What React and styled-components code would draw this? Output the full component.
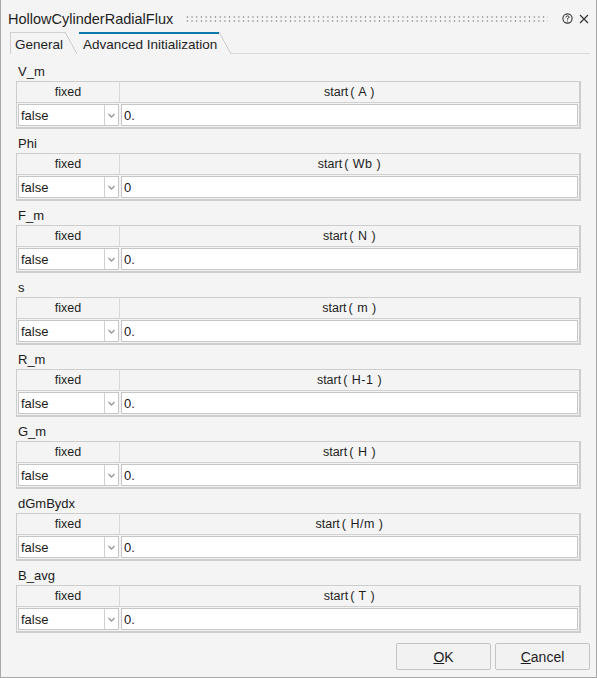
import React from "react";
import styled, { createGlobalStyle } from "styled-components";

const Global = createGlobalStyle`
  html, body { margin: 0; padding: 0; background: #f4f4f4; }
  body { font-family: "Liberation Sans", Arial, sans-serif; color: #1a1a1a; }
  * { box-sizing: border-box; }
`;

const params = [
  { name: "V_m", unit: "A", value: "0." },
  { name: "Phi", unit: "Wb", value: "0" },
  { name: "F_m", unit: "N", value: "0." },
  { name: "s", unit: "m", value: "0." },
  { name: "R_m", unit: "H-1", value: "0." },
  { name: "G_m", unit: "H", value: "0." },
  { name: "dGmBydx", unit: "H/m", value: "0." },
  { name: "B_avg", unit: "T", value: "0." },
];

const Window = styled.div`
  width: 597px;
  height: 678px;
  border: 1px solid #a8a8a8;
  border-top: none;
  background: #f4f4f4;
  display: flex;
  flex-direction: column;
`;

const TitleBar = styled.div`
  height: 32px;
  display: flex;
  align-items: center;
  padding: 6px 7px 0 7px;
  gap: 12px;
`;

const Title = styled.div`
  font-size: 14.5px;
  color: #1e1e1e;
  white-space: nowrap;
`;

const Grip = styled.div`
  flex: 1;
  height: 8px;
  background-image: radial-gradient(circle, #9e9e9e 0.8px, transparent 1.1px);
  background-size: 4.7px 4px;
`;

const TitleIcons = styled.div`
  display: flex;
  align-items: center;
  gap: 6px;
  padding-left: 2px;
`;

const Tabs = styled.div`
  display: flex;
  align-items: flex-end;
  height: 23px;
  margin: 0 6px 0 9px;
`;

const Tab = styled.div`
  position: relative;
  height: 22px;
  display: flex;
  align-items: center;
  padding: 2px 14px 0 4px;
  margin-right: ${(p) => (p.$active ? "0" : "2px")};
  font-size: 13.5px;
  color: #1e1e1e;
  border-left: ${(p) => (p.$active ? "none" : "1px solid #d0d0d0")};
  &::before {
    content: "";
    position: absolute;
    left: 0;
    right: 12px;
    top: 0;
    height: ${(p) => (p.$active ? "2px" : "1px")};
    background: ${(p) => (p.$active ? "#0a7aaa" : "#d0d0d0")};
  }
  &::after {
    content: "";
    position: absolute;
    right: 0;
    top: 0;
    bottom: 0;
    width: 12px;
    background: linear-gradient(
      to top right,
      transparent calc(50% - 0.7px),
      #c2c2c2 50%,
      transparent calc(50% + 0.7px)
    );
  }
`;

const TabRule = styled.div`
  flex: 1;
  border-bottom: 1px solid #dadada;
`;

const Content = styled.div`
  flex: 1;
  padding: 10px 15px 0 15px;
  display: flex;
  flex-direction: column;
`;

const Group = styled.div`
  display: flex;
  flex-direction: column;
  margin-bottom: 7px;
`;

const Label = styled.div`
  font-size: 13px;
  height: 17px;
  line-height: 15px;
  padding-left: 2px;
`;

const Table = styled.div`
  display: grid;
  grid-template-columns: 103px 1fr;
  border: 2px solid #cdcdcd;
  border-top: 1px solid #cdcdcd;
  border-left: 1px solid #cdcdcd;
  background: #f4f4f4;
`;

const HeadCell = styled.div`
  height: 21px;
  display: flex;
  align-items: center;
  justify-content: center;
  font-size: 12.5px;
  color: #1e1e1e;
  border-right: ${(p) => (p.$last ? "none" : "1px solid #d8d8d8")};
  border-bottom: 1px solid #d0d0d0;
`;

const Unit = styled.span`
  margin-left: 2px;
  letter-spacing: 0.5px;
`;

const DataCell = styled.div`
  height: 24px;
  padding: 1px;
  display: flex;
`;

const Select = styled.div`
  flex: 1;
  display: flex;
  background: #fff;
  border: 1px solid #c6c6c6;
`;

const SelectText = styled.div`
  flex: 1;
  font-size: 13px;
  display: flex;
  align-items: center;
  padding-left: 2px;
`;

const Arrow = styled.div`
  width: 14px;
  border-left: 1px solid #d0d0d0;
  display: flex;
  align-items: center;
  justify-content: center;
`;

const Input = styled.div`
  flex: 1;
  background: #fff;
  border: 1px solid #c6c6c6;
  font-size: 13px;
  display: flex;
  align-items: center;
  padding-left: 2px;
`;

const Footer = styled.div`
  display: flex;
  justify-content: flex-end;
  gap: 4px;
  padding: 3px 6px 7px 0;
`;

const Button = styled.button`
  width: 95px;
  height: 27px;
  background: #f2f2f2;
  border: 1px solid #c4c4c4;
  border-radius: 2px;
  font-family: "Liberation Sans", Arial, sans-serif;
  font-size: 14px;
  color: #1e1e1e;
  u { text-decoration: underline; }
`;

const HelpIcon = () => (
  <svg width="11" height="11" viewBox="0 0 11 11">
    <circle cx="5.5" cy="5.5" r="4.6" fill="none" stroke="#333" strokeWidth="1.1" />
    <path d="M3.9 4.4 Q3.9 2.9 5.5 2.9 Q7.1 2.9 7.1 4.2 Q7.1 5 5.5 5.6 L5.5 6.6" fill="none" stroke="#333" strokeWidth="1" />
    <circle cx="5.5" cy="8" r="0.6" fill="#333" />
  </svg>
);

const CloseIcon = () => (
  <svg width="10" height="10" viewBox="0 0 10 10">
    <path d="M1 1 L9 9 M9 1 L1 9" stroke="#333" strokeWidth="1.2" />
  </svg>
);

const Chevron = () => (
  <svg width="7" height="5" viewBox="0 0 7 5">
    <path d="M0.5 1 L3.5 4 L6.5 1" fill="none" stroke="#9a9a9a" strokeWidth="1.4" />
  </svg>
);

export default function App() {
  return (
    <>
      <Global />
      <Window>
        <TitleBar>
          <Title>HollowCylinderRadialFlux</Title>
          <Grip />
          <TitleIcons>
            <HelpIcon />
            <CloseIcon />
          </TitleIcons>
        </TitleBar>
        <Tabs>
          <Tab>General</Tab>
          <Tab $active>Advanced Initialization</Tab>
          <TabRule />
        </Tabs>
        <Content>
          {params.map((p) => (
            <Group key={p.name}>
              <Label>{p.name}</Label>
              <Table>
                <HeadCell>fixed</HeadCell>
                <HeadCell $last>
                  start<Unit>( {p.unit} )</Unit>
                </HeadCell>
                <DataCell>
                  <Select>
                    <SelectText>false</SelectText>
                    <Arrow>
                      <Chevron />
                    </Arrow>
                  </Select>
                </DataCell>
                <DataCell>
                  <Input>{p.value}</Input>
                </DataCell>
              </Table>
            </Group>
          ))}
        </Content>
        <Footer>
          <Button>
            <u>O</u>K
          </Button>
          <Button>
            <u>C</u>ancel
          </Button>
        </Footer>
      </Window>
    </>
  );
}
